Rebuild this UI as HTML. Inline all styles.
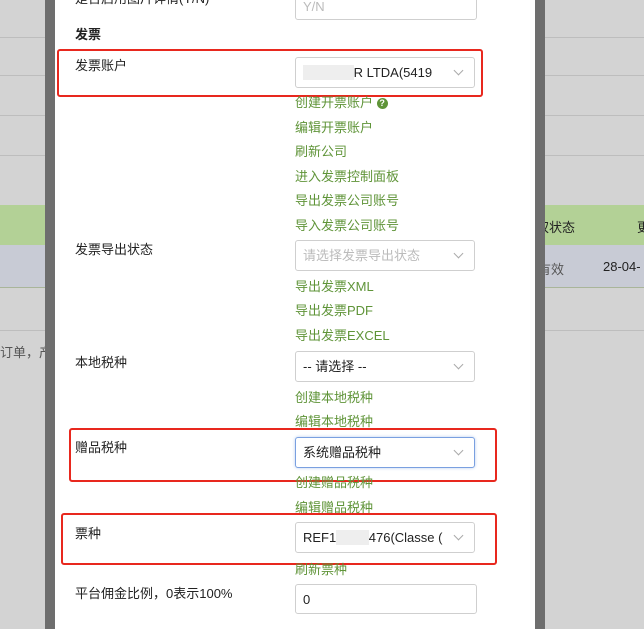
<!DOCTYPE html>
<html><head><meta charset="utf-8"><style>
body{margin:0;width:644px;height:629px;overflow:hidden;position:relative;background:#d3d3d3;font-family:"Liberation Sans","Noto Sans CJK SC",sans-serif;font-size:13px;color:#222}
.a{position:absolute;white-space:nowrap}
.hl{position:absolute;left:0;width:644px;height:1px;background:#bdbdbd}
.m{position:absolute;left:55px;top:0;width:480px;height:629px;background:#fff}
.lab{position:absolute;left:75px;line-height:16px}
.lk{position:absolute;left:295px;color:#5f9438;line-height:16px}
.sel{position:absolute;left:295px;width:178px;height:29px;border:1px solid #cfcfcf;border-radius:3px;background:#fff;box-sizing:content-box}
.sel span{position:absolute;left:7px;top:7px;line-height:16px}
.sel i{position:absolute;right:12px;top:9px;width:6px;height:6px;border-right:1px solid #aaa;border-bottom:1px solid #aaa;transform:rotate(45deg)}
.red{position:absolute;border:2px solid #e8281e;border-radius:3px}
</style></head><body>
<div class="hl" style="top:37px"></div><div class="hl" style="top:75px"></div><div class="hl" style="top:115px"></div><div class="hl" style="top:155px"></div>
<div class="a" style="left:0;top:205px;width:644px;height:40px;background:#b3d196"></div>
<div class="a" style="left:0;top:245px;width:644px;height:42px;background:#c8cbd5"></div>
<div class="hl" style="top:287px;background:#a9b59a"></div>
<div class="hl" style="top:330px"></div>
<div class="a" style="left:0;top:342px;color:#555">订单，产品</div>
<div class="a" style="left:536px;top:217px">权状态</div>
<div class="a" style="left:637px;top:217px">更</div>
<div class="a" style="left:538px;top:259px;color:#555">有效</div>
<div class="a" style="left:603px;top:259px">28-04-</div>
<div class="a" style="left:45px;top:0;width:10px;height:629px;background:#6e6e6e"></div>
<div class="a" style="left:535px;top:0;width:10px;height:629px;background:#6e6e6e"></div>
<div class="m"></div>

<div class="lab" style="top:-9px">是否启用图片详情(Y/N)</div>
<div class="sel" style="top:-11px;width:180px"><span style="top:9px;color:#bbb">Y/N</span></div>
<div class="lab" style="top:27px;font-weight:bold">发票</div>

<div class="red" style="left:57px;top:49px;width:422px;height:44px"></div>
<div class="lab" style="top:58px">发票账户</div>
<div class="sel" style="top:57px"><span><span style="position:static;color:#ddd;background:#eee">&nbsp;&nbsp;&nbsp;&nbsp;&nbsp;&nbsp;&nbsp;&nbsp;&nbsp;&nbsp;&nbsp;&nbsp;&nbsp;&nbsp;</span>R LTDA(5419</span><i></i></div>
<div class="lk" style="top:95px">创建开票账户 <span style="display:inline-block;width:11px;height:11px;border-radius:50%;background:#5f9438;color:#fff;font-size:9px;line-height:11px;text-align:center;font-weight:bold;vertical-align:1px">?</span></div>
<div class="lk" style="top:120px">编辑开票账户</div>
<div class="lk" style="top:144px">刷新公司</div>
<div class="lk" style="top:169px">进入发票控制面板</div>
<div class="lk" style="top:193px">导出发票公司账号</div>
<div class="lk" style="top:218px">导入发票公司账号</div>
<div class="lab" style="top:242px">发票导出状态</div>
<div class="sel" style="top:240px"><span style="color:#bbb">请选择发票导出状态</span><i></i></div>
<div class="lk" style="top:279px">导出发票XML</div>
<div class="lk" style="top:303px">导出发票PDF</div>
<div class="lk" style="top:328px">导出发票EXCEL</div>
<div class="lab" style="top:355px">本地税种</div>
<div class="sel" style="top:351px"><span>-- 请选择 --</span><i></i></div>
<div class="lk" style="top:390px">创建本地税种</div>
<div class="lk" style="top:414px">编辑本地税种</div>

<div class="red" style="left:69px;top:428px;width:424px;height:50px"></div>
<div class="lab" style="top:440px">赠品税种</div>
<div class="sel" style="top:437px;border-color:#7aa0e0;box-shadow:0 0 3px #b8cdf0"><span>系统赠品税种</span><i></i></div>
<div class="lk" style="top:475px">创建赠品税种</div>
<div class="lk" style="top:500px">编辑赠品税种</div>

<div class="red" style="left:61px;top:513px;width:432px;height:48px"></div>
<div class="lab" style="top:526px">票种</div>
<div class="sel" style="top:522px"><span>REF1<span style="position:static;color:#eee;background:#eee">&nbsp;&nbsp;&nbsp;&nbsp;&nbsp;&nbsp;&nbsp;&nbsp;&nbsp;</span>476(Classe (</span><i></i></div>
<div class="lk" style="top:562px">刷新票种</div>
<div class="lab" style="top:586px">平台佣金比例，0表示100%</div>
<div class="sel" style="top:584px;width:180px;height:28px"><span>0</span></div>
</body></html>
